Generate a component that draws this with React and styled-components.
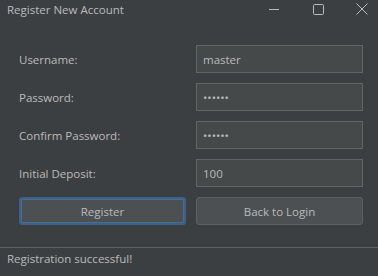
import { createGlobalStyle } from "styled-components"
import styled from "styled-components"

const Global = createGlobalStyle`
    html, body {
        margin: 0;
        padding: 0;
        background-color: #3c3f41;
    }
    * {
        box-sizing: border-box;
    }
`

export default function App() {
    return (
        <Janela>
            <Global />
            <BarraTitulo>
                <Titulo>Register New Account</Titulo>
                <Controles>
                    <BotaoJanela>
                        <svg width="10" height="10" viewBox="0 0 10 10">
                            <path d="M0 5.5 H10" stroke="#bbbbbb" strokeWidth="1" />
                        </svg>
                    </BotaoJanela>
                    <BotaoJanela>
                        <svg width="11" height="11" viewBox="0 0 11 11">
                            <rect x="0.5" y="0.5" width="10" height="10" rx="1" fill="none" stroke="#bbbbbb" strokeWidth="1" />
                        </svg>
                    </BotaoJanela>
                    <BotaoJanela>
                        <svg width="12" height="12" viewBox="0 0 12 12">
                            <path d="M0.5 0.5 L11.5 11.5 M11.5 0.5 L0.5 11.5" stroke="#bbbbbb" strokeWidth="1" />
                        </svg>
                    </BotaoJanela>
                </Controles>
            </BarraTitulo>

            <Formulario>
                <Rotulo>Username:</Rotulo>
                <Campo type="text" defaultValue="master" />
                <Rotulo>Password:</Rotulo>
                <Campo type="password" defaultValue="secret" />
                <Rotulo>Confirm Password:</Rotulo>
                <Campo type="password" defaultValue="secret" />
                <Rotulo>Initial Deposit:</Rotulo>
                <Campo type="text" defaultValue="100" />
                <Botao focado>Register</Botao>
                <Botao>Back to Login</Botao>
            </Formulario>

            <BarraStatus>Registration successful!</BarraStatus>
        </Janela>
    )
}

const Janela = styled.div`
    width: 378px;
    height: 276px;
    background-color: #3c3f41;
    display: flex;
    flex-direction: column;
    font-family: "Open Sans", "Noto Sans", sans-serif;
    font-size: 11.5px;
    color: #bbbbbb;
`

const BarraTitulo = styled.div`
    height: 18px;
    display: flex;
    align-items: center;
    justify-content: space-between;
    padding-left: 7px;
`

const Titulo = styled.span`
    font-size: 11.5px;
    color: #bbbbbb;
`

const Controles = styled.div`
    display: flex;
    height: 100%;
    gap: 32px;
    padding-right: 10px;
`

const BotaoJanela = styled.div`
    width: 12px;
    display: flex;
    align-items: center;
    justify-content: center;
`

const Formulario = styled.div`
    display: grid;
    grid-template-columns: 167px 167px;
    column-gap: 10px;
    row-gap: 10px;
    padding: 27px 15px 0 19px;
    align-items: center;
`

const Rotulo = styled.label`
    font-size: 11.5px;
    color: #bbbbbb;
`

const Campo = styled.input`
    height: 28px;
    width: 167px;
    background-color: #45494a;
    border: 1px solid #646464;
    color: #bbbbbb;
    font-family: inherit;
    font-size: 11.5px;
    padding: 0 6px;
    outline: none;
`

const Botao = styled.button`
    height: 28px;
    width: 167px;
    border-radius: 3px;
    background-color: #4c5052;
    color: #bbbbbb;
    font-family: inherit;
    font-size: 11.5px;
    border: ${props => (props.focado ? "2px solid #3d6185" : "1px solid #5e6060")};
    box-shadow: ${props => (props.focado ? "inset 0 0 0 1px #466d94" : "none")};
`

const BarraStatus = styled.div`
    margin-top: auto;
    height: 29px;
    border-top: 1px solid #5e6060;
    padding: 3px 0 0 7px;
    font-size: 11.5px;
    color: #bbbbbb;
`
